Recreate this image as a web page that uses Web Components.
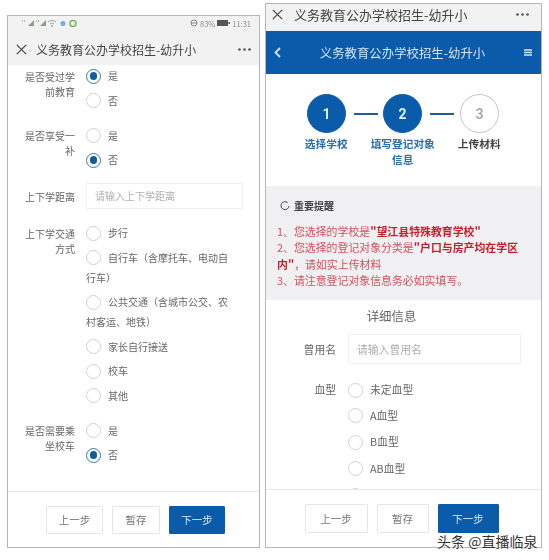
<!DOCTYPE html>
<html lang="zh">
<head>
<meta charset="utf-8">
<title>义务教育公办学校招生-幼升小</title>
<style>
  html, body { margin: 0; padding: 0; background: #fff; }
  body {
    width: 549px; height: 560px; overflow: hidden; position: relative;
    font-family: "Noto Sans CJK SC", "Noto Sans", sans-serif;
    color: #666; display: flex; align-items: flex-start;
  }
  phone-frame.left { margin: 15px 0 0 7px; width: 253px; height: 533px; }
  phone-frame.right { margin: 3px 0 0 5px; width: 277px; height: 545px; }
  .watermark {
    position: absolute; left: 437px; top: 532px; font-size: 14px; line-height: 18px;
    color: #333; white-space: nowrap;
    text-shadow: 0 0 2px #fff, 0 0 2px #fff, 0 0 1px #fff;
  }
  form-row.first { margin-top: -1px; }
  .alert-line { display: block; }
  b { font-weight: 700; color: #c81e2c; }
</style>
</head>
<body>

<template id="phone-frame-tpl">
  <style>
    :host { display: flex; flex-direction: column; box-sizing: border-box; border: 1px solid #b5b5b5; background: #fff; overflow: hidden; filter: blur(.45px); }
    .body { flex: 1; min-height: 0; overflow: hidden; }
  </style>
  <slot name="top"></slot>
  <div class="body"><slot></slot></div>
  <slot name="bottom"></slot>
</template>

<template id="status-bar-tpl">
  <style>
    :host { display: flex; align-items: center; justify-content: space-between; box-sizing: border-box; height: 17px; padding: 0 8px 3px 13px; background: #f2f2f2; font-size: 7.5px; color: #8a8a8a; }
    .group { display: flex; align-items: center; gap: 2px; }
    svg { display: block; }
  </style>
  <div class="group">
    <svg width="60" height="9" viewBox="0 0 60 9">
      <path d="M7 7 13 1V7Z M19 7 25 1V7Z" fill="#8f9a8f"/>
      <path d="M1 2h4M15 2h3" stroke="#aaa" stroke-width="1.5" stroke-dasharray="1 1"/>
      <path d="M27 3a6 6 0 0 1 8 0M29 5a3 3 0 0 1 4 0" fill="none" stroke="#9aa" stroke-width="1"/>
      <circle cx="31" cy="7" r="1" fill="#9aa"/>
      <circle cx="42" cy="4.5" r="2.5" fill="#6db3dd"/>
      <circle cx="52" cy="4.5" r="3" fill="none" stroke="#7fb661" stroke-width="1.6"/>
    </svg>
  </div>
  <div class="group">
    <svg width="8" height="8" viewBox="0 0 8 8"><circle cx="4" cy="4" r="3" fill="none" stroke="#888"/><path d="M1 4h6" stroke="#888"/></svg>
    <span>83%</span>
    <svg width="13" height="6" viewBox="0 0 13 6"><rect width="11" height="6" fill="#555"/><rect x="11.5" y="2" width="1.5" height="2" fill="#555"/></svg>
    <span>11:31</span>
  </div>
</template>

<template id="nav-bar-tpl">
  <style>
    :host { display: flex; align-items: center; box-sizing: border-box; background: #f2f2f2; padding: 0 8px 0 8px; font-size: 12px; color: #444; white-space: nowrap; }
    svg { display: block; flex: none; }
    .title { flex: 1; margin-left: var(--title-gap, 9px); }
  </style>
  <svg width="11" height="11" viewBox="0 0 11 11"><path d="M.8.8l9.4 9.4M10.2.8.8 10.2" stroke="#444" stroke-width="1.2" fill="none"/></svg>
  <div class="title"><slot></slot></div>
  <svg width="13" height="3" viewBox="0 0 13 3"><circle cx="1.5" cy="1.5" r="1.3" fill="#555"/><circle cx="6.5" cy="1.5" r="1.3" fill="#555"/><circle cx="11.5" cy="1.5" r="1.3" fill="#555"/></svg>
</template>

<template id="blue-bar-tpl">
  <style>
    :host { display: flex; align-items: center; height: 43px; background: #0a5cab; color: #d5e4f3; font-size: 12.4px; padding: 0 9px 0 8px; white-space: nowrap; }
    svg { display: block; flex: none; }
    .title { flex: 1; text-align: center; }
  </style>
  <svg width="7" height="11" viewBox="0 0 7 11"><path d="M6 1 1.5 5.5 6 10" stroke="#d5e4f3" stroke-width="1.8" fill="none"/></svg>
  <div class="title"><slot></slot></div>
  <svg width="8" height="7" viewBox="0 0 8 7"><path d="M0 1h8M0 3.5h8M0 6h8" stroke="#d5e4f3" stroke-width="1.3"/></svg>
</template>

<template id="radio-option-tpl">
  <style>
    :host { display: block; line-height: 20px; padding: 2.25px 0; font-size: var(--opt-size, 10px); color: #666; }
    .dot { display: inline-block; box-sizing: border-box; width: 15px; height: 15px; border-radius: 50%; border: 1.4px solid #d2d2d2; margin-right: 7px; vertical-align: -3.5px; background: #fff; position: relative; }
    :host([checked]) .dot { border-color: #3b7ca6; }
    :host([checked]) .dot::after { content: ""; position: absolute; inset: 2.6px; border-radius: 50%; background: #0f5d9e; }
  </style>
  <span class="dot"></span><slot></slot>
</template>

<template id="form-row-tpl">
  <style>
    :host { display: grid; grid-template-columns: var(--label-w, 67px) 1fr; column-gap: var(--label-gap, 11px); margin-bottom: 10.5px; font-size: var(--opt-size, 10px); color: #666; padding-right: var(--row-pad, 21px); }
    .label { text-align: right; line-height: 15px; padding-top: 4.75px; padding-left: 12px; }
    :host([center]) { align-items: center; }
    :host([center]) .label { padding-top: 0; }
  </style>
  <div class="label"><slot name="label"></slot></div>
  <div class="field"><slot></slot></div>
</template>

<template id="text-field-tpl">
  <style>
    :host { display: block; box-sizing: border-box; height: var(--field-h, 26px); border: 1px solid #f0f0f0; background: #fff; padding: 0 8px; font-size: var(--opt-size, 10px); line-height: calc(var(--field-h, 26px) - 2px); color: #aeaeae; }
  </style>
  <slot></slot>
</template>

<template id="action-bar-tpl">
  <style>
    :host { display: flex; justify-content: center; gap: var(--btn-gap, 9px); box-sizing: border-box; border-top: 1px solid #e9e9e9; background: #fff; padding-top: 14px; height: var(--bar-h, 56px); flex: none; }
  </style>
  <slot></slot>
</template>

<template id="action-button-tpl">
  <style>
    :host { display: block; box-sizing: border-box; height: var(--btn-h, 28px); border: 1px solid #e6e6e6; border-radius: 1px; text-align: center; font-size: 10.5px; line-height: calc(var(--btn-h, 28px) - 2px); color: #777; background: #fff; }
    :host([primary]) { background: #0a5cab; border-color: #0a5cab; color: #dbe8f5; }
  </style>
  <slot></slot>
</template>

<template id="step-bar-tpl">
  <style>
    :host { display: block; height: 112px; box-sizing: border-box; padding-top: 20px; background: #fff; }
    .dots { display: flex; align-items: center; margin-left: 41px; }
    .line { height: 2px; width: 24px; background: #1a5f9c; }
    .l1 { margin: 0 5px 0 8px; }
    .l2 { margin: 0 6px 0 8px; }
    .labels { display: grid; grid-template-columns: repeat(3, 76.5px); margin: 3px 0 0 22px; }
  </style>
  <div class="dots">
    <step-dot active>1</step-dot><div class="line l1"></div>
    <step-dot active>2</step-dot><div class="line l2"></div>
    <step-dot>3</step-dot>
  </div>
  <div class="labels"><slot></slot></div>
</template>

<template id="step-dot-tpl">
  <style>
    :host { display: flex; align-items: center; justify-content: center; flex: none; box-sizing: border-box; width: 39px; height: 39px; border-radius: 50%; border: 1.5px solid #c4c4c4; color: #aaa; background: #fff; font: 700 14px "Roboto", sans-serif; }
    :host([active]) { background: #0a5cab; border-color: #0a5cab; color: #e6eff8; }
  </style>
  <slot></slot>
</template>

<template id="step-label-tpl">
  <style>
    :host { display: block; text-align: center; padding: 0 6px; font-size: 10.7px; line-height: 16px; font-weight: 700; color: #2a70b0; }
    :host([pending]) { color: #444; }
  </style>
  <slot></slot>
</template>

<template id="notice-box-tpl">
  <style>
    :host { display: block; box-sizing: border-box; height: 114px; background: #f0eff2; padding: 12px 8px 0 11px; font-size: 10.9px; line-height: 16.5px; color: #d4505c; }
    .head { display: flex; align-items: center; gap: 4px; margin: 0 0 8px 3px; font-weight: 700; font-size: 10px; color: #444; }
    svg { display: block; }
  </style>
  <div class="head">
    <svg width="10" height="10" viewBox="0 0 10 10"><path d="M7.6 1.6A4 4 0 1 0 9 5" fill="none" stroke="#444" stroke-width="1"/></svg>
    <slot name="title"></slot>
  </div>
  <slot></slot>
</template>

<template id="section-title-tpl">
  <style>
    :host { display: block; height: 34px; line-height: 32px; text-align: center; font-size: 12.4px; color: #666; padding-right: 24px; }
  </style>
  <slot></slot>
</template>

<phone-frame class="left">
  <status-bar slot="top"></status-bar>
  <nav-bar slot="top" style="height:32px">义务教育公办学校招生-幼升小</nav-bar>

  <form-row class="first">
    <span slot="label">是否受过学前教育</span>
    <radio-option checked>是</radio-option>
    <radio-option>否</radio-option>
  </form-row>
  <form-row>
    <span slot="label">是否享受一补</span>
    <radio-option>是</radio-option>
    <radio-option checked>否</radio-option>
  </form-row>
  <form-row center style="margin-bottom:12px;padding-right:16px">
    <span slot="label">上下学距离</span>
    <text-field>请输入上下学距离</text-field>
  </form-row>
  <form-row style="padding-right:28px">
    <span slot="label">上下学交通方式</span>
    <radio-option>步行</radio-option>
    <radio-option>自行车（含摩托车、电动自行车）</radio-option>
    <radio-option>公共交通（含城市公交、农村客运、地铁）</radio-option>
    <radio-option>家长自行接送</radio-option>
    <radio-option>校车</radio-option>
    <radio-option>其他</radio-option>
  </form-row>
  <form-row>
    <span slot="label">是否需要乘坐校车</span>
    <radio-option>是</radio-option>
    <radio-option checked>否</radio-option>
  </form-row>

  <action-bar slot="bottom" style="padding-left:4px">
    <action-button style="width:57px">上一步</action-button>
    <action-button style="width:48px">暂存</action-button>
    <action-button primary style="width:56px">下一步</action-button>
  </action-bar>
</phone-frame>

<phone-frame class="right">
  <nav-bar slot="top" style="height:27px;font-size:13px;padding:0 12px 7px 6px;--title-gap:11px">义务教育公办学校招生-幼升小</nav-bar>
  <blue-bar slot="top">义务教育公办学校招生-幼升小</blue-bar>

  <step-bar>
    <step-label>选择学校</step-label>
    <step-label>填写登记对象信息</step-label>
    <step-label pending>上传材料</step-label>
  </step-bar>

  <notice-box>
    <span slot="title">重要提醒</span>
    <span class="alert-line">1、您选择的学校是<b>"望江县特殊教育学校"</b></span>
    <span class="alert-line">2、您选择的登记对象分类是<b>"户口与房产均在学区</b></span>
    <span class="alert-line"><b>内"</b>，请如实上传材料</span>
    <span class="alert-line">3、请注意登记对象信息务必如实填写。</span>
  </notice-box>

  <section-title>详细信息</section-title>

  <div style="--opt-size:10.8px;--label-w:70px;--label-gap:12px;--row-pad:20px;--field-h:30px">
    <form-row center style="margin-bottom:13px">
      <span slot="label">曾用名</span>
      <text-field>请输入曾用名</text-field>
    </form-row>
    <form-row>
      <span slot="label">血型</span>
      <radio-option>未定血型</radio-option>
      <radio-option style="padding:3.25px 0">A血型</radio-option>
      <radio-option style="padding:3.25px 0">B血型</radio-option>
      <radio-option style="padding:3.25px 0">AB血型</radio-option>
      <radio-option style="padding:3.25px 0">O血型</radio-option>
    </form-row>
  </div>

  <action-bar slot="bottom" style="--bar-h:58px;--btn-h:29px;padding-right:4px">
    <action-button style="width:63px">上一步</action-button>
    <action-button style="width:52px">暂存</action-button>
    <action-button primary style="width:61px">下一步</action-button>
  </action-bar>
</phone-frame>

<div class="watermark">头条 @直播临泉</div>

<script>
  // every element here is just a template clone, so one small base class does it
  class TemplateElement extends HTMLElement {
    constructor() {
      super();
      const tpl = document.getElementById(this.localName + '-tpl');
      this.attachShadow({ mode: 'open' }).appendChild(tpl.content.cloneNode(true));
    }
  }

  ['phone-frame', 'status-bar', 'nav-bar', 'blue-bar', 'radio-option', 'form-row',
   'text-field', 'action-bar', 'action-button', 'step-bar', 'step-dot', 'step-label',
   'notice-box', 'section-title'].forEach(name => {
    customElements.define(name, class extends TemplateElement {});
  });
</script>
</body>
</html>
